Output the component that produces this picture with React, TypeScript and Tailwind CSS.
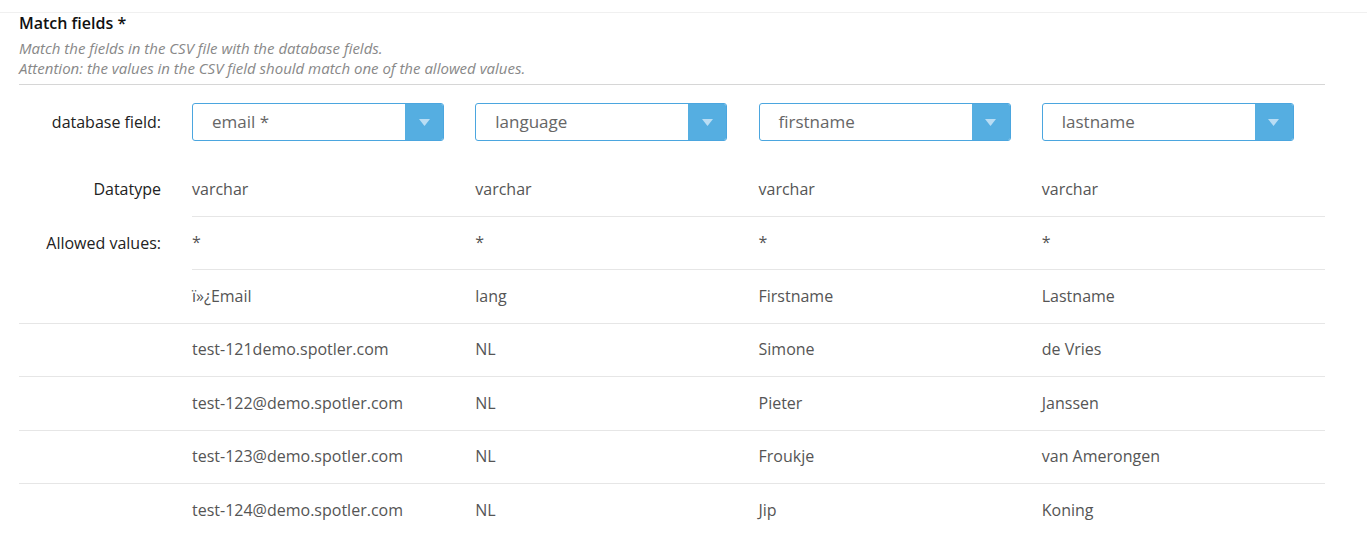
const columns = ["email *", "language", "firstname", "lastname"];

const csvHeader = ["ï»¿Email", "lang", "Firstname", "Lastname"];

const rows = [
  ["test-121demo.spotler.com", "NL", "Simone", "de Vries"],
  ["test-122@demo.spotler.com", "NL", "Pieter", "Janssen"],
  ["test-123@demo.spotler.com", "NL", "Froukje", "van Amerongen"],
  ["test-124@demo.spotler.com", "NL", "Jip", "Koning"],
];

function Select({ value }: { value: string }) {
  return (
    <div className="flex h-[38px] w-[252px] rounded-[3px] border border-[#4ba6df] bg-white overflow-hidden">
      <div className="flex-1 flex items-center pl-[19px] text-[17px] text-[#666]">
        {value}
      </div>
      <div className="w-[38px] bg-[#55aee1] flex items-center justify-center">
        <svg width="11" height="7" viewBox="0 0 11 7">
          <path d="M0 0 L11 0 L5.5 7 Z" fill="#b9ddf4" />
        </svg>
      </div>
    </div>
  );
}

function ValueCells({ values }: { values: string[] }) {
  return (
    <>
      {values.map((v, i) => (
        <div key={i} className="flex items-center pb-[1px]">
          {v}
        </div>
      ))}
    </>
  );
}

export default function App() {
  return (
    <div
      className="min-h-screen bg-white text-[16px] text-[#555]"
      style={{ fontFamily: '"Open Sans", "Liberation Sans", sans-serif' }}
    >
      <div className="h-[13px] border-b border-[#f0f0f0]" />
      <div className="pl-[19px] pr-[42px]">
        <h2 className="text-[16px] leading-[20px] font-semibold text-[#111]">
          Match fields *
        </h2>
        <div className="mt-[5px] text-[15px] leading-[20px] italic text-[#888]">
          <p>Match the fields in the CSV file with the database fields.</p>
          <p>Attention: the values in the CSV field should match one of the allowed values.</p>
        </div>
        <hr className="mt-[6px] border-t border-[#d6d6d6]" />

        <div className="mt-[18px] flex items-center">
          <div className="w-[173px] pr-[31px] text-right text-[#222]">
            database field:
          </div>
          <div className="flex-1 grid grid-cols-4">
            {columns.map((c) => (
              <Select key={c} value={c} />
            ))}
          </div>
        </div>

        <div className="mt-[22px] flex h-[53.5px]">
          <div className="w-[173px] pr-[31px] flex items-center justify-end pb-[1px] text-[#222]">
            Datatype
          </div>
          <div className="flex-1 grid grid-cols-4 border-b border-[#e6e6e6]">
            <ValueCells values={["varchar", "varchar", "varchar", "varchar"]} />
          </div>
        </div>

        <div className="flex h-[53.5px]">
          <div className="w-[173px] pr-[31px] flex items-center justify-end pb-[1px] text-[#222]">
            Allowed values:
          </div>
          <div className="flex-1 grid grid-cols-4 border-b border-[#e6e6e6]">
            <ValueCells values={["*", "*", "*", "*"]} />
          </div>
        </div>

        <div className="flex h-[53.5px] border-b border-[#e6e6e6]">
          <div className="w-[173px]" />
          <div className="flex-1 grid grid-cols-4">
            <ValueCells values={csvHeader} />
          </div>
        </div>

        {rows.map((r, i) => (
          <div
            key={i}
            className={
              "flex h-[53.5px] " +
              (i < rows.length - 1 ? "border-b border-[#e6e6e6]" : "")
            }
          >
            <div className="w-[173px]" />
            <div className="flex-1 grid grid-cols-4">
              <ValueCells values={r} />
            </div>
          </div>
        ))}
      </div>
    </div>
  );
}
